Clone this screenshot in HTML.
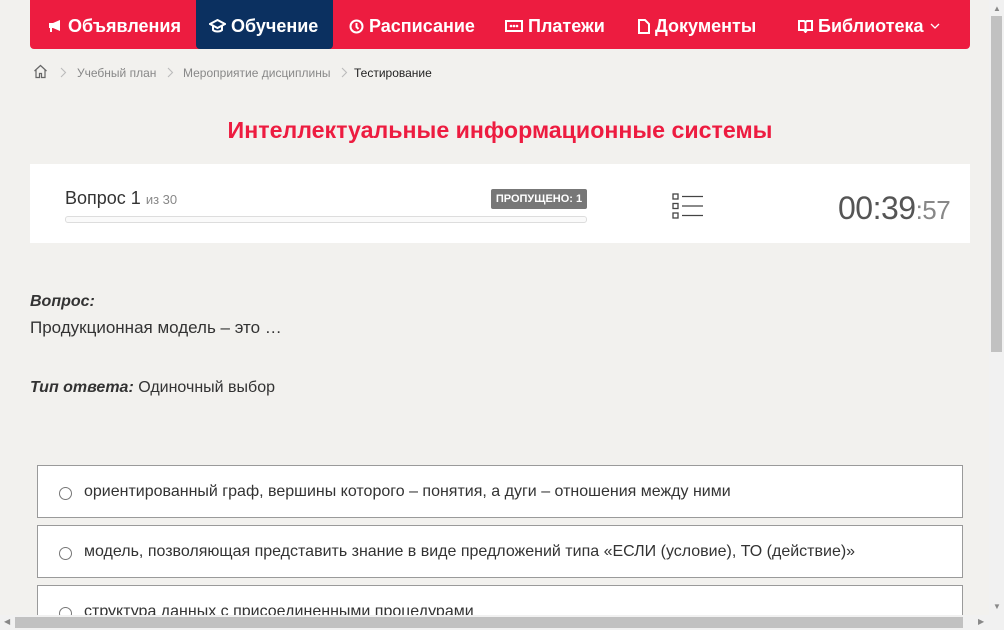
<!DOCTYPE html>
<html><head><meta charset="utf-8"><style>
*{margin:0;padding:0;box-sizing:border-box}
html,body{width:1004px;height:630px;overflow:hidden}
body{background:#f2f1ee;font-family:"Liberation Sans",sans-serif;position:relative;color:#333}
.nav{position:absolute;left:30px;top:0;width:940px;height:49px;background:#ed1c40;border-radius:0 0 4px 4px}
.nav .it{position:absolute;top:0;height:49px;line-height:52px;color:#fff;font-size:18px;font-weight:bold;white-space:nowrap}
.nav .act{background:#0b3060;border-radius:0 0 4px 4px}
.bc{position:absolute;top:66px;font-size:12px;color:#888}
.abs{position:absolute;white-space:nowrap}
.opt{position:absolute;left:37px;width:926px;height:53px;background:#fff;border:1px solid #9a9a9a}
.opt .r{position:absolute;left:21px;top:21px;width:13px;height:13px;border:1px solid #777;border-radius:50%}
.opt .t{position:absolute;left:46px;top:17px;font-size:16px;color:#333;white-space:nowrap}
</style></head><body>
<div class="nav">
<div class="it" style="left:18px">
<svg width="15" height="14" viewBox="0 0 15 14" style="vertical-align:-1px"><path d="M1 4h4l7-3v11l-7-3H4v4H2V9H1z" fill="#fff"/></svg> Объявления</div>
<div class="it act" style="left:166px;width:137px;padding-left:13px">
<svg width="17" height="14" viewBox="0 0 17 14" style="vertical-align:-1px"><path d="M8.5 1L1 5l7.5 4L16 5z M4 7v4c2 2 7 2 9 0V7" fill="none" stroke="#fff" stroke-width="2"/></svg> Обучение</div>
<div class="it" style="left:319px">
<svg width="15" height="15" viewBox="0 0 15 15" style="vertical-align:-2px"><circle cx="7.5" cy="7.5" r="6" fill="none" stroke="#fff" stroke-width="2"/><path d="M7.5 4v4l2 2" stroke="#fff" stroke-width="2" fill="none"/></svg> Расписание</div>
<div class="it" style="left:475px">
<svg width="18" height="12" viewBox="0 0 18 12" style="vertical-align:0"><rect x="1" y="1" width="16" height="10" fill="none" stroke="#fff" stroke-width="2"/><circle cx="6" cy="6" r="1.3" fill="#fff"/><circle cx="9" cy="6" r="1.3" fill="#fff"/><circle cx="12" cy="6" r="1.3" fill="#fff"/></svg> Платежи</div>
<div class="it" style="left:608px">
<svg width="12" height="15" viewBox="0 0 12 15" style="vertical-align:-2px"><path d="M1 1h6l4 4v9H1z" fill="none" stroke="#fff" stroke-width="2"/></svg> Документы</div>
<div class="it" style="left:768px">
<svg width="15" height="14" viewBox="0 0 15 14" style="vertical-align:-1px"><path d="M1 2h5l1.5 1L9 2h5v9H9l-1.5 2L6 11H1z M7.5 3v9" fill="none" stroke="#fff" stroke-width="2"/></svg> Библиотека <svg width="12" height="8" viewBox="0 0 12 8" style="vertical-align:2px"><path d="M2 2l4 4 4-4" fill="none" stroke="#fff" stroke-width="1.3"/></svg></div>
</div>
<svg class="abs" style="left:33px;top:64px" width="15" height="15" viewBox="0 0 15 15"><path d="M1.5 7L7.5 1.5 13.5 7M3 6v7.5h3.5v-4h2v4H12V6" fill="none" stroke="#666" stroke-width="1.2"/></svg>
<svg class="abs" style="left:60px;top:67px" width="7" height="11" viewBox="0 0 7 11"><path d="M1 1l4.5 4.5L1 10" fill="none" stroke="#bbb" stroke-width="1.1"/></svg>
<div class="bc" style="left:77px">Учебный план</div>
<svg class="abs" style="left:167px;top:67px" width="7" height="11" viewBox="0 0 7 11"><path d="M1 1l4.5 4.5L1 10" fill="none" stroke="#bbb" stroke-width="1.1"/></svg>
<div class="bc" style="left:183px">Мероприятие дисциплины</div>
<svg class="abs" style="left:341px;top:67px" width="7" height="11" viewBox="0 0 7 11"><path d="M1 1l4.5 4.5L1 10" fill="none" stroke="#bbb" stroke-width="1.1"/></svg>
<div class="bc" style="left:354px;color:#222">Тестирование</div>
<div class="abs" style="left:0;width:1000px;text-align:center;top:117px;font-size:23.2px;font-weight:bold;color:#ed1c40">Интеллектуальные информационные системы</div>
<div class="abs" style="left:30px;top:164px;width:940px;height:79px;background:#fff"></div>
<div class="abs" style="left:65px;top:188px;font-size:18px;color:#333">Вопрос 1 <span style="font-size:13px;color:#888">из 30</span></div>
<div class="abs" style="left:491px;top:189px;width:96px;height:20px;background:#777;border-radius:2px;color:#fff;font-size:11px;font-weight:bold;text-align:center;line-height:20px">ПРОПУЩЕНО: 1</div>
<div class="abs" style="left:65px;top:216px;width:522px;height:7px;border:1px solid #ddd;border-radius:3px;background:#fafafa"></div>
<svg class="abs" style="left:672px;top:193px" width="32" height="27" viewBox="0 0 32 27"><g fill="none" stroke="#444" stroke-width="1.3"><rect x="1" y="1" width="5" height="5"/><rect x="1" y="10.5" width="5" height="5"/><rect x="1" y="20" width="5" height="5"/><path d="M10 3.5h21M10 13h21M10 22.5h21"/></g></svg>
<div class="abs" style="left:838px;top:190px;font-size:32px;color:#555;letter-spacing:-0.5px">00:39<span style="font-size:26px;color:#888">:57</span></div>
<div class="abs" style="left:30px;top:293px;font-size:16px;font-weight:bold;font-style:italic">Вопрос:</div>
<div class="abs" style="left:30px;top:318px;font-size:17px">Продукционная модель – это …</div>
<div class="abs" style="left:30px;top:379px;font-size:16px"><b><i>Тип ответа:</i></b> Одиночный выбор</div>
<div class="opt" style="top:465px"><div class="r"></div><div class="t">ориентированный граф, вершины которого – понятия, а дуги – отношения между ними</div></div>
<div class="opt" style="top:525px"><div class="r"></div><div class="t">модель, позволяющая представить знание в виде предложений типа «ЕСЛИ (условие), ТО (действие)»</div></div>
<div class="opt" style="top:585px;height:45px;border-bottom:none"><div class="r"></div><div class="t">структура данных с присоединенными процедурами</div></div>
<div class="abs" style="left:989px;top:0;width:15px;height:630px;background:#f1f1f1"></div>
<div class="abs" style="left:991px;top:16px;width:11px;height:336px;background:#c1c1c1"></div>
<div class="abs" style="left:993px;top:4px;font-size:8px;color:#888">▲</div>
<div class="abs" style="left:993px;top:602px;font-size:8px;color:#888">▼</div>
<div class="abs" style="left:0;top:615px;width:989px;height:15px;background:#f1f1f1"></div>
<div class="abs" style="left:15px;top:617px;width:948px;height:11px;background:#c1c1c1"></div>
<div class="abs" style="left:4px;top:617px;font-size:8px;color:#888">◀</div>
<div class="abs" style="left:978px;top:617px;font-size:8px;color:#888">▶</div>
</body></html>
